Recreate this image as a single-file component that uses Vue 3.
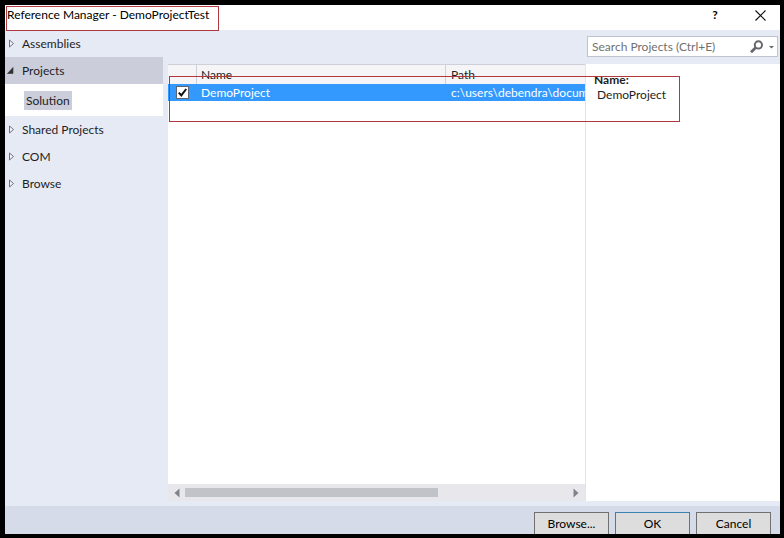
<script setup>
import { ref } from 'vue'

const groups = ref([
  { name: 'Assemblies', open: false, children: [] },
  { name: 'Projects', open: true, children: ['Solution'] },
  { name: 'Shared Projects', open: false, children: [] },
  { name: 'COM', open: false, children: [] },
  { name: 'Browse', open: false, children: [] },
])

const projects = ref([
  { name: 'DemoProject', path: 'c:\\users\\debendra\\documents', checked: true },
])

const query = ref('')
</script>

<template>
  <div class="dialog">
    <header class="titlebar">
      <h1 class="title">Reference Manager - DemoProjectTest</h1>
      <button class="caption" type="button" aria-label="Help">?</button>
      <button class="caption" type="button" aria-label="Close">
        <svg width="11" height="11" viewBox="0 0 11 11" fill="none" stroke="#111" stroke-width="1.1">
          <path d="M0.5 0.5L10.5 10.5M10.5 0.5L0.5 10.5" />
        </svg>
      </button>
      <div class="mark mark-title"></div>
    </header>

    <div class="body">
      <nav class="sidebar">
        <div v-for="g in groups" :key="g.name">
          <button class="group" :class="{ open: g.open }" type="button" :aria-expanded="g.open">
            <svg v-if="g.open" class="arrow" width="10" height="10" viewBox="0 0 10 10">
              <path d="M6 1.5V7.5H0.5Z" fill="#333" stroke="#333" stroke-width="0.6" />
            </svg>
            <svg v-else class="arrow" width="10" height="10" viewBox="0 0 10 10">
              <path d="M2.5 1L6.5 4.5L2.5 8Z" fill="#f4f5fa" stroke="#70727c" />
            </svg>
            <span>{{ g.name }}</span>
          </button>
          <div v-if="g.open" class="children">
            <button v-for="c in g.children" :key="c" class="child" type="button">{{ c }}</button>
          </div>
        </div>
      </nav>

      <section class="list">
        <table class="grid">
          <thead>
            <tr>
              <th class="col-check"></th>
              <th class="col-name">Name</th>
              <th>Path</th>
            </tr>
          </thead>
          <tbody>
            <tr v-for="p in projects" :key="p.name">
              <td class="cell-check">
                <input v-model="p.checked" class="check" type="checkbox" :aria-label="p.name">
                <svg v-if="p.checked" class="tick" width="9" height="9" viewBox="0 0 9 9" fill="none" stroke="#111" stroke-width="2">
                  <path d="M0.8 4.6L3.3 7.4L8.2 1" />
                </svg>
              </td>
              <td>{{ p.name }}</td>
              <td>{{ p.path }}</td>
            </tr>
          </tbody>
        </table>
        <div class="scrollbar">
          <svg width="6" height="10" viewBox="0 0 6 10"><path d="M5.5 0.5V9.5L0.5 5Z" fill="#80828c" /></svg>
          <div class="track"><div class="thumb"></div></div>
          <svg width="6" height="10" viewBox="0 0 6 10"><path d="M0.5 0.5V9.5L5.5 5Z" fill="#80828c" /></svg>
        </div>
      </section>

      <aside class="side">
        <div class="search">
          <input v-model="query" type="text" placeholder="Search Projects (Ctrl+E)" aria-label="Search Projects">
          <button class="search-button" type="button" aria-label="Search">
            <svg width="26" height="14" viewBox="0 0 26 14" fill="none" stroke="#66676c">
              <circle cx="9.4" cy="4.9" r="3.6" stroke-width="2" />
              <path d="M6.8 7.6L2 12.2" stroke-width="2.8" />
              <path d="M20 6H25L22.5 8.5Z" fill="#66676c" stroke="none" />
            </svg>
          </button>
        </div>
        <dl class="details">
          <dt>Name:</dt>
          <dd>DemoProject</dd>
        </dl>
      </aside>

      <div class="mark mark-row"></div>
    </div>

    <footer class="footer">
      <button class="action" type="button">Browse...</button>
      <button class="action primary" type="button">OK</button>
      <button class="action" type="button">Cancel</button>
    </footer>
  </div>
</template>

<style>
body {
  margin: 0;
  background: #000;
}
</style>

<style scoped>
* {
  box-sizing: border-box;
}
.dialog {
  display: flex;
  flex-direction: column;
  min-height: 100vh;
  border: solid #000;
  border-width: 5px 4px 4px 5px;
  background: #e6eaf5;
  color: #1e1e1e;
  font-family: Lato, "Open Sans", sans-serif;
  font-size: 12px;
  line-height: 16px;
}
button,
input {
  margin: 0;
  font: inherit;
  color: inherit;
}
.titlebar {
  position: relative;
  display: flex;
  align-items: flex-start;
  height: 25px;
  padding: 2px 14px 0 2px;
  background: #fff;
}
.title {
  flex: 1;
  margin: 0;
  font-size: 12px;
  font-weight: 400;
  color: #000;
}
.caption {
  display: flex;
  align-items: center;
  justify-content: center;
  width: 12px;
  height: 16px;
  margin-left: 33px;
  padding: 0;
  border: 0;
  background: none;
  color: #000;
  font-weight: 700;
}
.mark {
  position: absolute;
  border: 1px solid #b0393f;
  pointer-events: none;
}
.mark-title {
  top: 1px;
  left: 1px;
  width: 213px;
  height: 25px;
}
.mark-row {
  top: 46px;
  left: 164px;
  right: 100px;
  height: 46px;
}
.body {
  position: relative;
  display: flex;
  flex: 1;
  padding-bottom: 5px;
}
.sidebar {
  width: 163px;
  padding-right: 5px;
}
.group {
  display: flex;
  align-items: center;
  gap: 5px;
  width: 100%;
  height: 27px;
  padding: 0 2px;
  border: 0;
  background: none;
  text-align: left;
}
.group.open {
  background: #cbcddb;
}
.children {
  height: 32px;
  padding: 7px 19px;
  background: #fff;
}
.child {
  height: 19px;
  padding: 0 2px;
  border: 0;
  background: #cbcddb;
}
.list {
  display: flex;
  flex: 1;
  flex-direction: column;
  min-width: 0;
  margin-top: 34px;
  border-right: 1px solid #e3e4ec;
  background: #fff;
}
.grid {
  width: 100%;
  table-layout: fixed;
  border-collapse: separate;
  border-spacing: 0;
}
.grid th {
  height: 20px;
  padding: 1px 4px;
  border: solid #cdcfd9;
  border-width: 1px 1px 0 0;
  background: #f5f5f7;
  font-weight: 400;
  text-align: left;
}
.grid th:last-child {
  padding-left: 5px;
  border-right: 0;
}
.grid .col-check {
  width: 29px;
}
.grid .col-name {
  width: 249px;
}
.grid td {
  height: 17px;
  padding: 0 4px;
  overflow: hidden;
  background: #3399ff;
  color: #fff;
  white-space: nowrap;
}
.grid td:last-child {
  padding-left: 5px;
}
.grid .cell-check {
  position: relative;
  padding: 0 8px;
}
.check {
  display: block;
  width: 13px;
  height: 13px;
  appearance: none;
  border: 1px solid #60656c;
  background: #fff;
}
.tick {
  position: absolute;
  top: 4px;
  left: 10px;
  pointer-events: none;
}
.scrollbar {
  display: flex;
  align-items: center;
  gap: 5px;
  height: 17px;
  margin-top: auto;
  padding: 0 6px;
  background: #e8e8ec;
}
.track {
  flex: 1;
}
.thumb {
  width: 66%;
  height: 9px;
  background: #c2c3c9;
}
.side {
  display: flex;
  flex-direction: column;
  width: 194px;
}
.search {
  display: flex;
  align-items: center;
  height: 21px;
  margin: 6px 2px 7px 1px;
  border: 1px solid #bfc3d0;
  background: #fff;
}
.search input {
  flex: 1;
  min-width: 0;
  padding: 0 4px;
  border: 0;
  outline: 0;
  background: none;
}
.search input::placeholder {
  color: #717171;
  opacity: 1;
}
.search-button {
  display: flex;
  padding: 0 2px 0 0;
  border: 0;
  background: none;
}
.details {
  flex: 1;
  margin: 0;
  padding: 8px;
  background: #fff;
  line-height: 15px;
}
.details dt {
  font-weight: 700;
}
.details dd {
  margin: 0 0 0 3px;
}
.footer {
  display: flex;
  justify-content: flex-end;
  gap: 6px;
  padding: 6px 9px 0;
  background: #d5dbe9;
}
.action {
  width: 75px;
  height: 22px;
  padding: 0;
  border: 1px solid #707070;
  border-bottom: 0;
  background: #dddddd;
  color: #000;
}
.action.primary {
  border-color: #3c7fb1;
}
</style>
